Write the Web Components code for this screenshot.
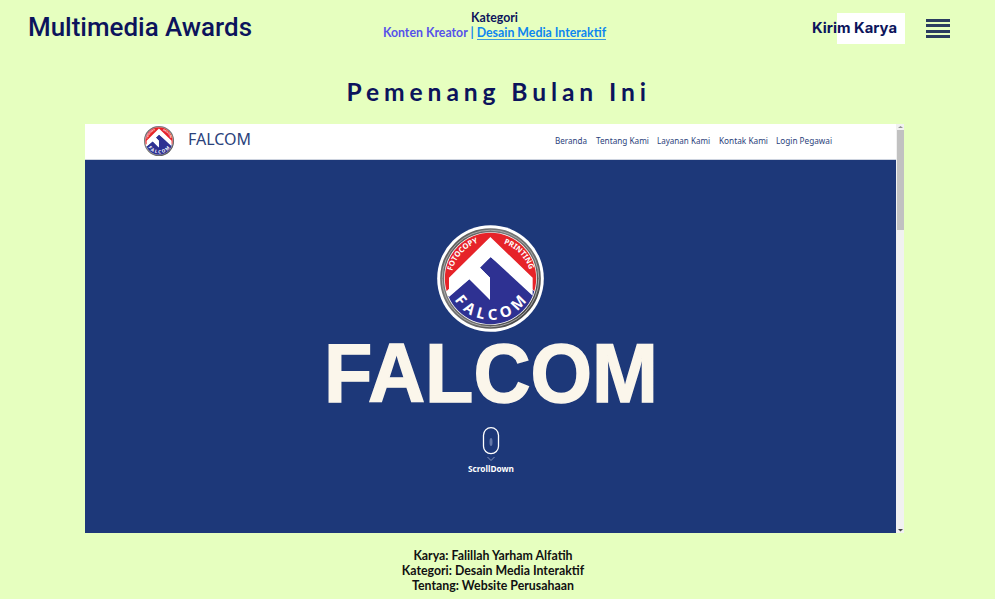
<!DOCTYPE html>
<html lang="id"><head><meta charset="utf-8"><title>Multimedia Awards</title>
<style>html,body{margin:0;height:100%;overflow:hidden;background:#e6ffbf}</style></head>
<body><awards-page></awards-page>
<script>
const define=(name,css,html,setup)=>customElements.define(name,class extends HTMLElement{
  constructor(){super();const r=this.attachShadow({mode:'open'});r.innerHTML='<style>'+css+'</style>'+html;if(setup)setup(this,r);}
});

/* A line of text scaled to a set width: attributes w, h, size, base, weight, font */
define('fit-text',':host{display:block;line-height:0}svg{display:block;overflow:visible}text{fill:currentColor;stroke:currentColor;stroke-width:var(--stroke,0)}',
'<svg><text x="0" lengthAdjust="spacingAndGlyphs"></text></svg>',(h,r)=>{
  const s=r.querySelector('svg'),t=r.querySelector('text'),a=n=>h.getAttribute(n);
  s.setAttribute('width',a('w'));s.setAttribute('height',a('h'));
  t.setAttribute('textLength',a('w'));t.setAttribute('y',a('base'));
  t.style.cssText=`font:${a('weight')||400} ${a('size')}px ${a('font')}, sans-serif`;
  t.textContent=a('text');
});

define('falcom-badge',':host{display:block}svg{display:block;width:100%;height:100%}text{font:700 23px "Noto Sans",sans-serif;fill:#fff}.n{font-size:45px}',
`<svg viewBox="36 32 321 321">
<defs><linearGradient id="g" x2="1" y2="1"><stop stop-color="#4a4a4a"/><stop offset=".3" stop-color="#777"/><stop offset=".65" stop-color="#686868"/><stop offset="1" stop-color="#333"/></linearGradient>
<clipPath id="c"><circle cx="196.500" cy="192.500" r="137"/></clipPath></defs>
<circle cx="196.500" cy="192.500" r="160" fill="#fff"/><circle cx="196.500" cy="192.500" r="145" fill="none" stroke="url(#g)" stroke-width="12"/>
<circle cx="196.500" cy="192.500" r="145" fill="none" stroke="#aaa" stroke-width="3"/>
<g clip-path="url(#c)"><path fill="#e62329" d="M50 40h293v205L196 100 50 245z"/><path fill="#2e3192" d="M72 245l61-51 62 60v-64l-32-32 34-30 146 115v100H50V245z"/>
<path fill="#fff" d="M196 68L323 190V244L197 128 165 160 195 190V257L133 195 72 248V190z"/></g>
<path id="lt" fill="none" d="M82 170A117 117 0 0 1 169 82"/><path id="rt" fill="none" d="M236 88A118 118 0 0 1 316 178"/>
<path id="bt" fill="none" d="M88 257A130 130 0 0 0 312 248"/>
<text><textPath href="#lt" textLength="120" lengthAdjust="spacingAndGlyphs">FOTOCOPY</textPath></text><text><textPath href="#rt" textLength="114" lengthAdjust="spacingAndGlyphs">PRINTING</textPath></text>
<text class="n"><textPath href="#bt" textLength="256">FALCOM</textPath></text></svg>`);

define('category-nav',':host{display:flex;flex-direction:column;align-items:center;font:700 12.330px/15px Lato,sans-serif;color:#0c145c}.row{white-space:pre;color:#5552ea}.on{color:#0d86f0;border-bottom:1px solid #3b98db;display:inline-block;height:14px}i{font-style:normal;color:#0d86f0}',
'<span>Kategori</span><span class="row">Konten Kreator <i>|</i> <span class="on">Desain Media Interaktif</span></span>');

define('send-button',':host{display:block;width:94px;height:32px;background:linear-gradient(#fff,#fff) right/68px 31px no-repeat;color:#0c145c}fit-text{margin-left:1px}',
'<fit-text text="Kirim Karya" w="85" h="31" base="20.500" size="14.500" weight="700" font="Inter"></fit-text>');
define('menu-icon',':host{display:grid;gap:2.400px;width:24px}i{height:3px;background:#2b3c60}','<i></i><i></i><i></i><i></i>');

define('awards-header',`:host{display:grid;grid-template-columns:355px 279px 177px 115px auto;height:76px;color:#0c145c;align-items:start}
.brand{padding:12px 0 0 28px}category-nav{padding-top:10px}send-button{grid-column:4;margin-top:12px}menu-icon{margin-top:19px}`,
`<div class="brand"><fit-text text="Multimedia Awards" w="224" h="30" base="24" size="26" weight="500" font="Roboto"></fit-text></div>
<category-nav></category-nav><send-button></send-button><menu-icon></menu-icon>`);

define('site-bar',`:host{display:flex;height:35px;background:#fff;color:#2b427b;border-bottom:1px solid #cdd3df;box-sizing:content-box}
falcom-badge{width:32px;height:32px;margin:1px 13px 0 58px}.name{padding-top:4px;width:367px}nav{display:flex;gap:8.500px;padding-top:10px}`,
`<falcom-badge></falcom-badge><div class="name"><fit-text text="FALCOM" w="63" h="24" base="17" size="16.500" font="'Noto Sans'"></fit-text></div>
<nav></nav>`,(h,r)=>{
 for(const [t,w] of [['Beranda',32],['Tentang Kami',53],['Layanan Kami',53],['Kontak Kami',49],['Login Pegawai',56]])
  r.querySelector('nav').insertAdjacentHTML('beforeend',`<fit-text text="${t}" w="${w}" h="12" base="9.500" size="8.500" font="'Noto Sans'"></fit-text>`);
});

define('scroll-hint',':host{display:flex;flex-direction:column;align-items:center;color:#fff}svg{display:block}',
`<svg width="20" height="38" viewBox="0 0 20 38" fill="none"><rect x="2.500" y="3.700" width="15" height="26" rx="7.500" stroke="#fff" stroke-width="1.300"/><ellipse cx="10" cy="18" rx="1.500" ry="4" fill="#6377a8"/><path d="M6.500 33l3.500 3.500 3.500-3.500" stroke="#8795bb"/></svg>
<fit-text text="ScrollDown" w="46" h="12" base="9.500" size="8.500" weight="700" font="'Noto Sans'"></fit-text>`);

define('site-hero',':host{display:flex;flex-direction:column;align-items:center;height:373px;background:#1d3879;color:#fbf6eb}falcom-badge{width:107px;height:107px;margin-top:65px}.t{padding-top:6px;margin-left:0;--stroke:1.500px}scroll-hint{margin-top:13.500px;margin-left:1px}',
`<falcom-badge></falcom-badge><div class="t"><fit-text text="FALCOM" w="334" h="72" base="63.500" size="84" weight="700" font="'Liberation Sans'"></fit-text></div><scroll-hint></scroll-hint>`);

define('scroll-track',':host{display:flex;flex-direction:column;justify-content:space-between;width:8px;background:#f1f1f1}svg{display:block}.thumb{height:100px;width:7px;margin-left:1px;background:#c1c1c1}',
`<div><svg width="8" height="6"><path d="M2 4h5L4.500 2z" fill="#929292"/></svg><div class="thumb"></div></div><svg width="8" height="6"><path d="M2 2h5L4.500 4.500z" fill="#444"/></svg>`);

define('work-preview',':host{display:grid;grid-template-columns:811px 8px;width:819px;height:409px;margin-left:85px}',
'<div><site-bar></site-bar><site-hero></site-hero></div><scroll-track></scroll-track>');
define('work-caption',':host{display:flex;flex-direction:column;align-items:center;width:986px;padding-top:15px;font:700 12.330px/15px Lato,sans-serif;color:#111}',
'<span>Karya: Falillah Yarham Alfatih</span><span>Kategori: Desain Media Interaktif</span><span>Tentang: Website Perusahaan</span>');
define('awards-page',':host{display:block;width:995px;height:599px;overflow:hidden}h1{margin:0;height:48px;padding-left:346.500px;font:700 24.600px/32px Lato,sans-serif;letter-spacing:4.900px;color:#0c145c;white-space:nowrap}',
'<awards-header></awards-header><h1>Pemenang Bulan Ini</h1><work-preview></work-preview><work-caption></work-caption>');
</script></body></html>
